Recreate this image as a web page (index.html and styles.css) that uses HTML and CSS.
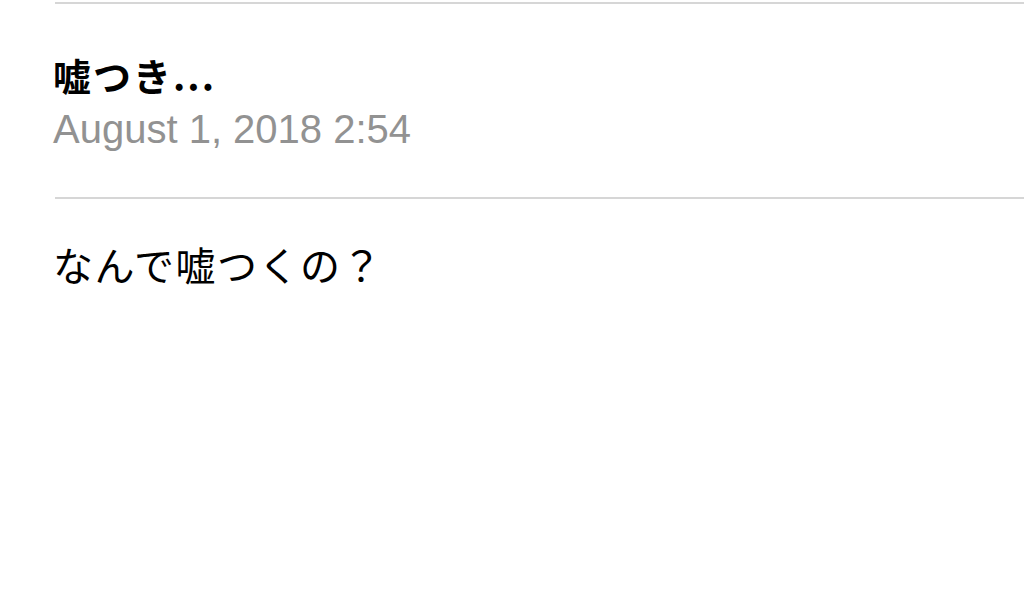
FILE: index.html
```html
<!DOCTYPE html>
<html lang="ja">
<head>
    <meta charset="UTF-8">
    <meta name="viewport" content="width=device-width, initial-scale=1.0">
    <title>メモ</title>
    <link rel="stylesheet" href="styles.css">
</head>
<body>
    <div class="note">
        <hr class="divider">
        <div class="note-header">
            <h1 class="note-title">嘘つき...</h1>
            <p class="note-date">August 1, 2018 2:54</p>
        </div>
        <hr class="divider">
        <p class="note-body">なんで嘘つくの？</p>
    </div>
</body>
</html>
```

FILE: styles.css
```css
body {
    margin: 0;
    background-color: #fff;
    font-family: "Liberation Sans", "Noto Sans CJK JP", sans-serif;
    color: #000;
}

.note {
    padding-left: 53px;
    padding-top: 2px;
}

.divider {
    margin: 0 0 0 2px;
    border: none;
    border-top: 2px solid #d6d6d6;
}

.note-header {
    padding: 48px 0 45px;
}

.note-title {
    margin: 0;
    font-family: "Noto Sans CJK JP", sans-serif;
    font-size: 38px;
    font-weight: bold;
    line-height: 46px;
    letter-spacing: 2px;
}

.note-date {
    margin: 8px 0 0;
    font-size: 40px;
    line-height: 46px;
    color: #929292;
}

.note-body {
    margin: 40px 0 0;
    font-family: "Noto Sans CJK JP", sans-serif;
    font-size: 40px;
    line-height: 50px;
    letter-spacing: 1.5px;
}
```
